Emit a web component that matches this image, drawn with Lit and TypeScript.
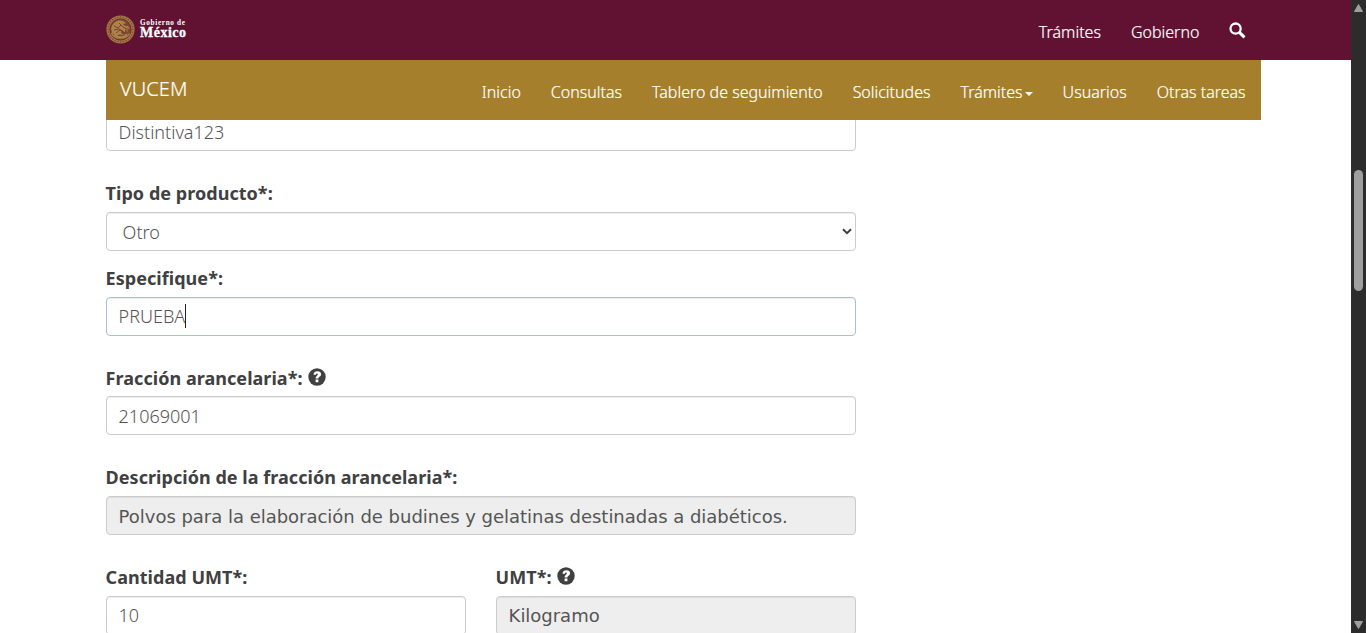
import { LitElement, html, css, svg } from "lit";
import { customElement, property } from "lit/decorators.js";

@customElement("gob-field")
class GobField extends LitElement {
  @property() label = "";
  @property() value = "";
  @property() kind = "text";
  @property({ type: Boolean }) help = false;

  static styles = css`
    :host { display: block; }
    .label { box-sizing: border-box; display: flex; align-items: center; height: 26px; margin-bottom: 5px; color: #404041;
      padding-bottom: var(--label-lift, 2px); font: 700 18px/24px "Noto Sans", sans-serif; letter-spacing: .04px; white-space: nowrap; }
    .caption { margin-left: -.4px; }
    .help { width: 18px; height: 18px; margin: -2px 0 0 5.3px; display: block; }
    .control { box-sizing: border-box; height: 39px; border: 1px solid #ccc; border-radius: 4px; background: #fff;
      box-shadow: inset 0 1px 1px rgba(0,0,0,.075); padding: var(--value-drop, 1px) 12px var(--value-lift, 0px) 11.6px; display: flex; align-items: center;
      color: #555; font: 300 18px/26px "Noto Sans", "Open Sans", sans-serif; white-space: nowrap; }
    .select { padding: 1px 3px 0 15.6px; justify-content: space-between; }
    .focus { border-color: #a9bfd4; padding-top: 0; padding-bottom: 1px; }
    .disabled { background: #eee; font-family: "DejaVu Sans", sans-serif; font-weight: 400; letter-spacing: -.02px; }
    .caret { width: 1px; height: 24px; background: #222; }
    .arrow { width: 10px; height: 7px; margin-top: -2px; }
  `;

  render() {
    return html`
      ${this.label
        ? html`<div class="label"><span class="caption">${this.label}</span>${this.help
            ? html`<svg class="help" viewBox="0 0 18 18"><circle cx="9" cy="9" r="8.7" fill="#404041"/><path d="M5.500 6.700C5.700 4.400 7.200 3.300 9.400 3.300c2.300 0 3.700 1.200 3.700 3 0 2.300-2.700 2.500-2.700 4.300H7.600c0-2.700 2.200-2.900 2.200-4.100 0-.6-.3-.9-.9-.9s-.9.4-1 1.100zM7.600 11.600h2.800v2.700H7.600z" fill="#fff"/></svg>`
            : ""}</div>`
        : ""}
      <div class="control ${this.kind}"><span class="value">${this.value}</span>${this.kind === "focus"
        ? html`<span class="caret"></span>` : ""}${this.kind === "select"
        ? html`<svg class="arrow" viewBox="0 0 10 7"><path d="M1 1.2 5 5.2 9 1.2" fill="none" stroke="#404041" stroke-width="2"/></svg>` : ""}</div>
    `;
  }
}

@customElement("app-root")
class AppRoot extends LitElement {
  static styles = css`
    :host { display: block; position: relative; width: 1366px; height: 633px; overflow: hidden; background: #fff;
      font-family: "Noto Sans", sans-serif; }
    .page { display: flex; height: 633px; }
    .view { width: 1351px; height: 633px; overflow: hidden; }
    .top { position: relative; z-index: 2; box-sizing: border-box; height: 60px; background: #611232; color: #fff;
      display: flex; justify-content: space-between; padding: 0 105px 0 106px; }
    .brand { display: flex; align-items: center; height: 59px; gap: 5px; }
    .seal { width: 29px; height: 29px; display: block; }
    .wordmark { display: flex; flex-direction: column; color: #fff; }
    .gob { font: 700 7.2px/7px "Liberation Serif", serif; letter-spacing: .68px; }
    .mex { font: 700 14px/14px "Liberation Serif", serif; letter-spacing: .5px; -webkit-text-stroke: .3px #fff; margin-top: -1px; }
    .links { display: flex; font-size: 16px; font-weight: 300; line-height: 24px; gap: 30px; white-space: nowrap; -webkit-text-stroke: .2px #fff; }
    .top .links { padding-top: 20px; margin-right: -.4px; }
    .search { width: 17px; height: 17px; margin-top: 2px; }
    .bar { position: relative; z-index: 2; box-sizing: border-box; width: 1155px; height: 60px; margin-left: 106px;
      background: #a57f2c; color: #fff; display: flex; justify-content: space-between; padding: 0 15.4px 0 14px; }
    .bar .links { padding-top: 20px; align-items: flex-start; }
    .title { font-size: 20px; font-weight: 300; line-height: 28px; padding-top: 15px; letter-spacing: .1px; -webkit-text-stroke: .2px #fff; }
    .drop { display: flex; align-items: center; gap: 2px; }
    .tri { border: 4px solid transparent; border-top-color: #fff; border-bottom: 0; margin-top: 4px; }
    .form { width: 750px; margin: -8px 0 0 106px; display: flex; flex-direction: column; }
    .g30 { margin-top: 30px; }
    .g29 { margin-top: 29px; --label-lift: 0px; }
    .g15 { margin-top: 15px; }
    .desc { --value-drop: 3px; }
    .qty { --value-drop: 0px; --value-lift: 1px; }
    .pair { display: grid; grid-template-columns: 1fr 1fr; gap: 30px; }
    .scroll { box-sizing: border-box; width: 15px; height: 633px; background: #2c2c2c; display: flex; flex-direction: column;
      align-items: center; }
    .up, .down { width: 9px; height: 8px; display: block; }
    .up { margin-top: 4px; }
    .thumb { width: 9px; height: 121px; border-radius: 5px; background: #9f9f9f; margin-top: 158px; }
    .down { margin-top: auto; margin-bottom: 4px; }
  `;

  private seal() {
    const ticks = Array.from({ length: 28 }, (_, i) => {
      const a = (i * Math.PI) / 14;
      return svg`<circle cx=${14.5 + 12.4 * Math.cos(a)} cy=${14.5 + 12.4 * Math.sin(a)} r=".75" fill="#7d4a31"/>`;
    });
    return html`<svg class="seal" viewBox="0 0 29 29">
      <circle cx="14.5" cy="14.5" r="14.1" fill="#a07840"/>${ticks}
      <circle cx="14.5" cy="14.5" r="10.6" fill="#7d4832" stroke="#701f35" stroke-width=".8"/>
      <path d="M5 14c1-5 4-8 9-8.7l3 .7 3 2-2 1-2-.5c2 2 4 3 6 2.5l2 3-3-1 1 4-3-3v4l-3-3-1 3 3 2-5-.5-3 2-2-3-3 .5 1-2z" fill="#ac8349"/>
      <path d="M8 11l4 2 3-3M8 15l5-1 3 2M13 8l4 4 4 2M10 18l4-3 5 3" fill="none" stroke="#713035" stroke-width=".8"/>
      <path d="M5.500 18.500c3 6 14.500 6.500 18 0M8 19c3 4 10 4 13 0" fill="none" stroke="#ac8349" stroke-width="1.300"/>
    </svg>`;
  }

  render() {
    return html`<div class="page">
      <div class="view">
        <header class="top">
          <div class="brand">${this.seal()}<div class="wordmark"><span class="gob">Gobierno de</span><span class="mex">México</span></div></div>
          <nav class="links"><span>Trámites</span><span>Gobierno</span>
            <svg class="search" viewBox="0 0 17 17"><circle cx="6.6" cy="6.6" r="5.1" fill="none" stroke="#fff" stroke-width="2.300"/><path d="M10.400 10.400 15.500 15.400" stroke="#fff" stroke-width="3"/></svg>
          </nav>
        </header>
        <nav class="bar"><span class="title">VUCEM</span>
          <div class="links"><span>Inicio</span><span>Consultas</span><span>Tablero de seguimiento</span><span>Solicitudes</span><span class="drop">Trámites<i class="tri"></i></span><span>Usuarios</span><span>Otras tareas</span></div>
        </nav>
        <main class="form">
          <gob-field value="Distintiva123"></gob-field>
          <gob-field class="g30" label="Tipo de producto*:" value="Otro" kind="select"></gob-field>
          <gob-field class="g15" label="Especifique*:" value="PRUEBA" kind="focus"></gob-field>
          <gob-field class="g29" label="Fracción arancelaria*:" help value="21069001"></gob-field>
          <gob-field class="g30 desc" label="Descripción de la fracción arancelaria*:" value="Polvos para la elaboración de budines y gelatinas destinadas a diabéticos." kind="disabled"></gob-field>
          <div class="pair g30">
            <gob-field class="qty" label="Cantidad UMT*:" value="10"></gob-field>
            <gob-field label="UMT*:" help value="Kilogramo" kind="disabled"></gob-field>
          </div>
        </main>
      </div>
      <div class="scroll">
        <svg class="up" viewBox="0 0 9 8"><path d="M4.500 .5 8.500 7.500H.5z" fill="#9f9f9f" stroke="#9f9f9f" stroke-linejoin="round"/></svg>
        <div class="thumb"></div>
        <svg class="down" viewBox="0 0 9 8"><path d="M.5 .5H8.500L4.500 7.500z" fill="#9f9f9f" stroke="#9f9f9f" stroke-linejoin="round"/></svg>
      </div>
    </div>`;
  }
}
